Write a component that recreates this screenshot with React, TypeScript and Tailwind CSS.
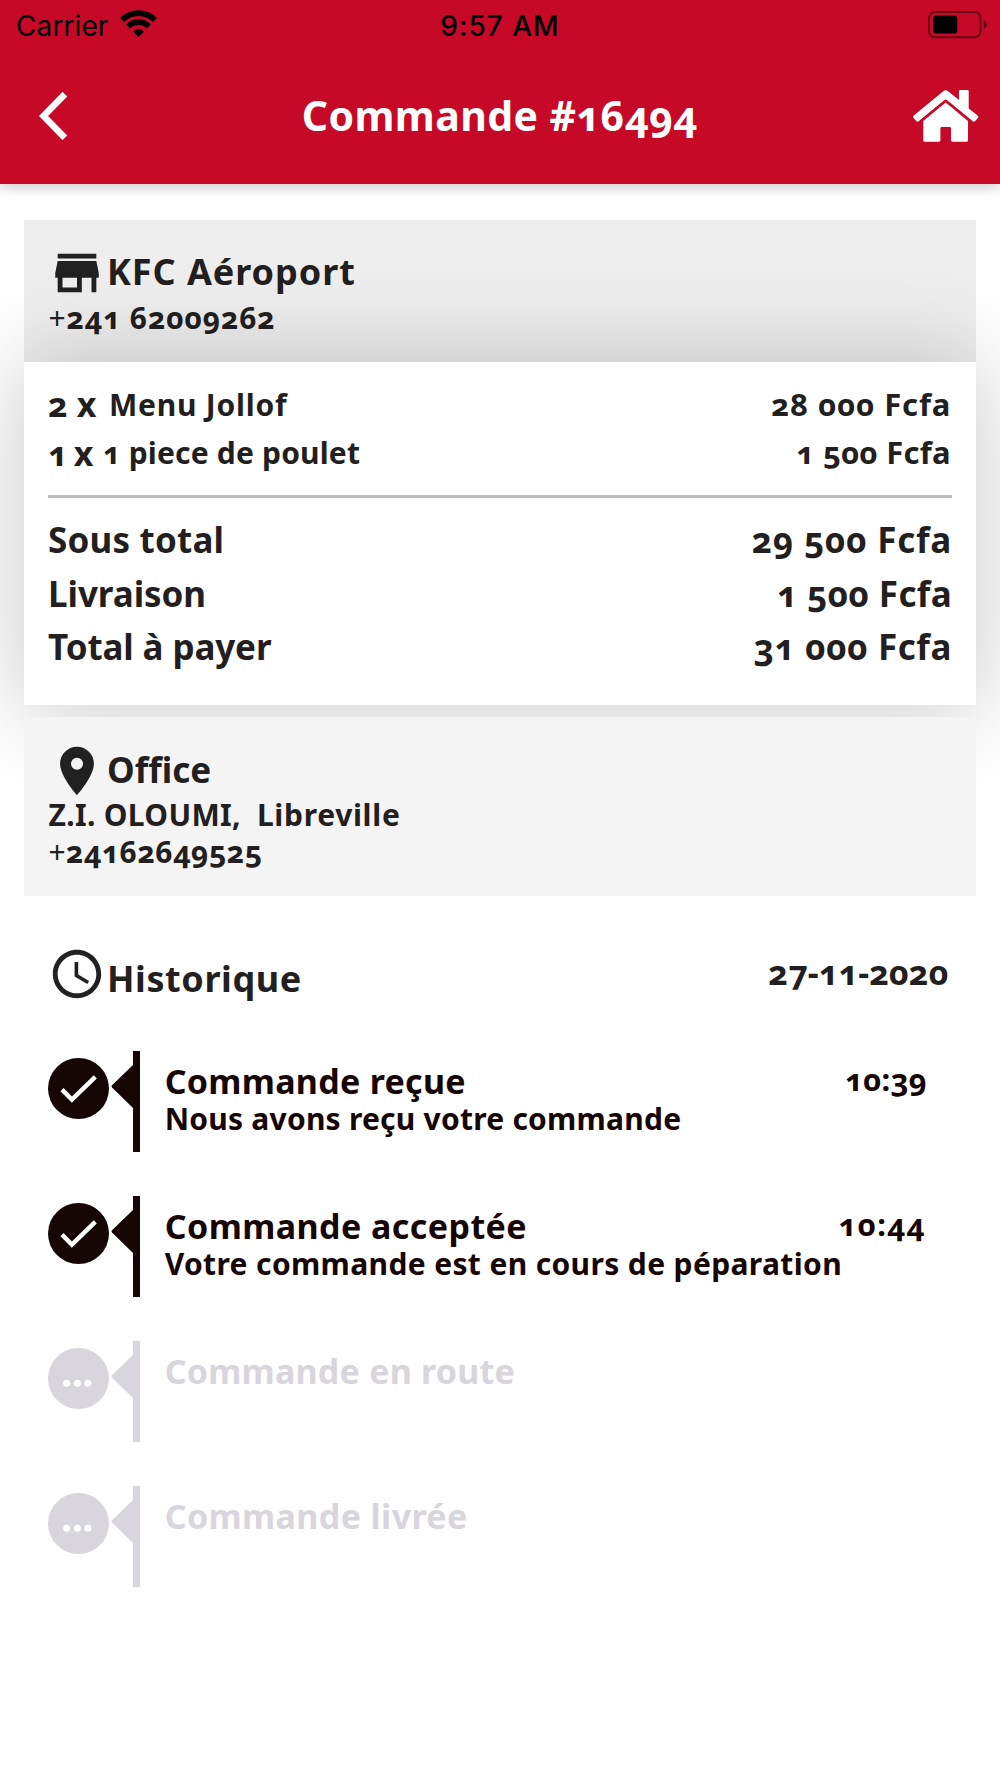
import React from 'react';
import clsx from 'clsx';
import { MdAccessTime, MdPlace, MdStore } from 'react-icons/md';

interface OrderItem {
  quantity: number;
  name: string;
  price: string;
  qtyClass: string;
  nameClass: string;
  priceClass: string;
}

interface Total {
  label: string;
  amount: string;
  labelClass: string;
  amountClass: string;
}

interface Step {
  title: string;
  titleClass: string;
  message?: string;
  messageClass?: string;
  time?: string;
  timeClass?: string;
  done: boolean;
}

const items: OrderItem[] = [
  {
    quantity: 2,
    name: 'Menu Jollof',
    price: '28 000 Fcfa',
    qtyClass: 'mr-[12.7px]',
    nameClass: 'tracking-[0.77px]',
    priceClass: 'tracking-[0.9px] mr-[0.7px]',
  },
  {
    quantity: 1,
    name: '1 piece de poulet',
    price: '1 500 Fcfa',
    qtyClass: 'tracking-[-1.5px] mr-[11.2px]',
    nameClass: 'tracking-[0.18px]',
    priceClass: 'tracking-[0.25px] mr-[1.2px]',
  },
];

const totals: Total[] = [
  { label: 'Sous total', amount: '29 500 Fcfa', labelClass: 'tracking-[0.2px]', amountClass: 'tracking-[0.75px]' },
  { label: 'Livraison', amount: '1 500 Fcfa', labelClass: 'tracking-[-0.06px]', amountClass: 'tracking-[0.35px]' },
  { label: 'Total à payer', amount: '31 000 Fcfa', labelClass: 'tracking-[-0.12px]', amountClass: 'tracking-[0.58px]' },
];

const steps: Step[] = [
  {
    title: 'Commande reçue',
    titleClass: 'tracking-[0.28px]',
    message: 'Nous avons reçu votre commande',
    messageClass: 'tracking-[0.23px]',
    time: '10:39',
    timeClass: 'tracking-[0.18px] mr-[25px]',
    done: true,
  },
  {
    title: 'Commande acceptée',
    titleClass: 'tracking-[0.43px]',
    message: 'Votre commande est en cours de péparation',
    messageClass: 'tracking-[0.36px]',
    time: '10:44',
    timeClass: 'tracking-[1.3px] mr-[26px]',
    done: true,
  },
  { title: 'Commande en route', titleClass: 'tracking-[0.22px]', done: false },
  { title: 'Commande livrée', titleClass: 'tracking-[0.38px]', done: false },
];

const WifiIcon = () => (
  <svg className="h-[27px] w-[37px]" viewBox="0 0 37 27" fill="none" stroke="#000" strokeWidth="5.6">
    <path d="M2 10 A23.3 23.3 0 0 1 35 10" />
    <path d="M8.2 16.4 A14.6 14.6 0 0 1 28.8 16.4" />
    <path d="M18.5 27 L13 21.5 A7.8 7.8 0 0 1 24 21.5 Z" fill="#000" stroke="none" />
  </svg>
);

const BatteryIcon = () => (
  <svg className="h-[28px] w-[60px]" viewBox="0 0 60 28">
    <rect x="1" y="1" width="51.5" height="25.2" rx="6" fill="none" stroke="#000" strokeOpacity="0.45" strokeWidth="2" />
    <rect x="5" y="4.6" width="24.3" height="18" rx="3.4" fill="#000" />
    <path d="M55.8 9 Q58.8 10.6 58.8 13.6 Q58.8 16.6 55.8 18.2 Z" fill="#000" fillOpacity="0.5" />
  </svg>
);

const BackIcon = () => (
  <svg className="h-12 w-7" viewBox="0 0 28 48" fill="none" stroke="#fff" strokeWidth="6.6">
    <path d="M25.8 2.2 L4.5 24 L25.8 45.8" />
  </svg>
);

const HomeIcon = () => (
  <svg className="h-[52px] w-[66px]" viewBox="0 0 66 52" fill="#fff">
    <path d="M30.6 1 Q32.7 -0.7 34.8 1 L46 9.9 V1.3 Q46 0 47.3 0 H54.4 Q55.7 0 55.7 1.3 V18.4 L64.6 25.5 Q66 26.7 64.9 28 L62.1 31 Q60.8 32.2 59.5 31.1 L34 10 Q32.7 8.9 31.4 10 L5.9 31.1 Q4.6 32.2 3.3 31 L0.6 28 Q-0.5 26.7 0.8 25.5 Z" />
    <path d="M32.7 12.6 L55 31 V50.2 Q55 51.7 53.5 51.7 H39.4 Q38 51.7 38 50.3 V38.4 Q38 37 36.6 37 H28.8 Q27.4 37 27.4 38.4 V50.3 Q27.4 51.7 26 51.7 H11.8 Q10.3 51.7 10.3 50.2 V31 Z" />
  </svg>
);

const StepBadge = ({ done }: { done: boolean }) => (
  <div className="mt-[7.5px] h-[60.5px] w-[60.5px] rounded-full bg-current">
    <svg className="h-full w-full" viewBox="0 0 60.5 60.5">
      {done ? (
        <path d="M14 31.6 L23.9 41.6 L47.3 18.9" fill="none" stroke="#fff" strokeWidth="4.4" />
      ) : (
        <g fill="#fff">
          <circle cx="18.7" cy="35.3" r="3.5" />
          <circle cx="29.4" cy="35.3" r="3.5" />
          <circle cx="39.9" cy="35.3" r="3.5" />
        </g>
      )}
    </svg>
  </div>
);

const StepRow = ({ step }: { step: Step }) => (
  <div className={clsx('flex h-[101.5px]', step.done ? 'text-[#170606]' : 'text-[#d8d5dc]')}>
    <StepBadge done={step.done} />
    <svg className="mt-[14.5px] ml-[2.5px] h-[43px] w-[22px]" viewBox="0 0 22 43" fill="currentColor">
      <path d="M22 0 L1 20.3 Q0 21.4 1 22.5 L22 43 Z" />
    </svg>
    <div className="w-[7px] bg-current" />
    <div className="mt-[10.4px] ml-[24.7px] flex-1 whitespace-nowrap">
      <div className="flex justify-between">
        <h3 className={clsx('text-[34px] leading-[40px]', step.titleClass)}>{step.title}</h3>
        {step.time && <span className={clsx('text-[31px] leading-[37px]', step.timeClass)}>{step.time}</span>}
      </div>
      {step.message && <p className={clsx('text-[30px] leading-[36px]', step.messageClass)}>{step.message}</p>}
    </div>
  </div>
);

const Header = () => (
  <header className="relative h-[183.5px] bg-[#c50927] shadow-[0_3px_13px_rgba(0,0,0,0.22)]">
    <div className="grid h-[51px] grid-cols-3 items-center font-['Inter',sans-serif] text-[28px] text-black">
      <div className="flex items-center gap-[12px] pl-4">
        <span className="font-normal tracking-[0.1px]">Carrier</span>
        <span className="-mt-[4px]">
          <WifiIcon />
        </span>
      </div>
      <span className="text-center font-medium tracking-[1px]">9:57 AM</span>
      <div className="-mt-px flex justify-end pr-[12px]">
        <BatteryIcon />
      </div>
    </div>
    <div className="flex h-[129px] items-center justify-between pr-[21px] pl-[38.5px] text-white">
      <div className="flex w-[66px]">
        <BackIcon />
      </div>
      <h1 className="-ml-[18px] text-[41px] leading-none tracking-[0.4px]">Commande #16494</h1>
      <HomeIcon />
    </div>
  </header>
);

export default function App() {
  return (
    <div className="h-[1778px] w-[1000px] overflow-hidden bg-white font-['Noto_Sans',sans-serif] font-bold text-[#231f20] oldstyle-nums">
      <Header />

      <main className="mt-[36.5px] px-6">
        {/* Restaurant */}
        <section className="h-[142px] bg-[#eeeeee] px-6 pt-[23.5px]">
          <div className="flex h-[58px] items-center">
            <MdStore className="size-[58px] text-[#212121]" />
            <h2 className="mb-px ml-px text-[36px] leading-none tracking-[0.95px]">KFC Aéroport</h2>
          </div>
          <p className="ml-[0.5px] text-[30px] leading-[31px] tracking-[0.75px]">
            <span className="font-normal">+</span>241 62009262
          </p>
        </section>

        {/* Order details */}
        <section className="relative h-[343px] bg-white px-6 pt-[18px] shadow-[0_3px_86px_6px_rgba(0,0,0,0.2)]">
          {items.map(item => (
            <div key={item.name} className="flex h-[48.5px] items-center text-[30px]">
              <span className={clsx('text-[34px] leading-none', item.qtyClass)}>{item.quantity} x</span>
              <span className={item.nameClass}>{item.name}</span>
              <span className={clsx('-mt-px ml-auto text-[31px]', item.priceClass)}>{item.price}</span>
            </div>
          ))}
          <hr className="mt-[18px] mb-[16px] h-[3px] border-0 bg-[#bdbdbd]" />
          {totals.map(total => (
            <div key={total.label} className="flex h-[53.3px] items-center justify-between text-[35px]">
              <span className={total.labelClass}>{total.label}</span>
              <span className={total.amountClass}>{total.amount}</span>
            </div>
          ))}
        </section>

        {/* Delivery address */}
        <section className="relative mt-[12px] h-[178.5px] bg-[#f4f4f4] px-6 pt-[24.5px]">
          <div className="-mb-[2.5px] flex h-[58px] items-center">
            <MdPlace className="size-[58px] text-[#212121]" />
            <h2 className="mb-[2px] ml-px text-[35px] leading-none">Office</h2>
          </div>
          <p className="ml-[0.5px] flex gap-4 text-[30px] leading-[36.5px]">
            <span className="tracking-[0.32px]">Z.I. OLOUMI,</span>
            <span className="tracking-[0.69px]">Libreville</span>
          </p>
          <p className="ml-[0.5px] text-[30px] leading-[36.5px] tracking-[0.37px]">
            <span className="font-normal">+</span>24162649525
          </p>
        </section>

        {/* History */}
        <section className="mt-[49px] px-6">
          <div className="flex h-[58px] items-center">
            <MdAccessTime className="size-[58px] text-[#212121]" />
            <h2 className="mt-[10px] ml-px text-[36px] leading-none tracking-[0.58px]">Historique</h2>
            <span className="mr-[3.5px] mb-[3px] ml-auto text-[34px] leading-none">27-11-2020</span>
          </div>
          <div className="mt-[48px] flex flex-col gap-[43.5px]">
            {steps.map(step => (
              <StepRow key={step.title} step={step} />
            ))}
          </div>
        </section>
      </main>
    </div>
  );
}
